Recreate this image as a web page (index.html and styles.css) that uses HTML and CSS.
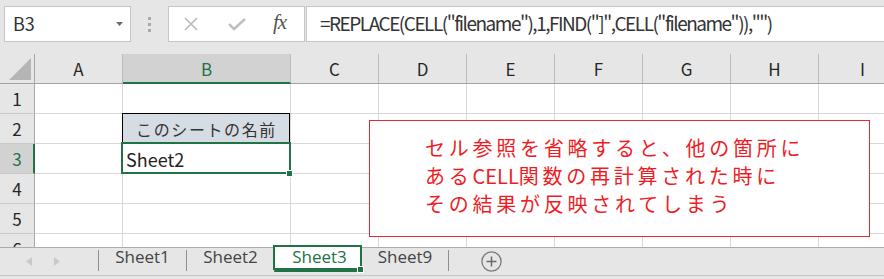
FILE: index.html
```html
<!DOCTYPE html>
<html lang="ja">
  <head>
    <meta charset="UTF-8" />
    <meta name="viewport" content="width=device-width, initial-scale=1.0" />
    <title>CELL関数 - Excel</title>
    <link rel="stylesheet" href="styles.css">
  </head>
  <body>
    <div class="formula-bar">
      <div class="name-box">
        <span>B3</span>
        <svg class="drop" width="7" height="4" viewBox="0 0 7 4"><path d="M0 0h7L3.5 4z" fill="#6b6b6b"/></svg>
      </div>
      <div class="grip"><i></i><i></i><i></i></div>
      <div class="fx-buttons">
        <svg width="16" height="14" viewBox="0 0 16 14"><path d="M2 1l12 12M14 1L2 13" stroke="#b9b9b9" stroke-width="1.6" fill="none"/></svg>
        <svg width="18" height="13" viewBox="0 0 18 13"><path d="M1 6l5 5L17 1" stroke="#bdbdbd" stroke-width="2.4" fill="none"/></svg>
        <span class="fx">fx</span>
      </div>
      <div class="formula">=REPLACE(CELL("filename"),1,FIND("]",CELL("filename")),"")</div>
    </div>

    <div class="sheet">
      <div class="row head">
        <div class="rh corner"><svg width="22" height="22" viewBox="0 0 22 22"><path d="M22 0v22H0z" fill="#b5b5b5"/></svg></div>
        <div class="ch">A</div>
        <div class="ch wide selected">B</div>
        <div class="ch">C</div>
        <div class="ch">D</div>
        <div class="ch">E</div>
        <div class="ch">F</div>
        <div class="ch">G</div>
        <div class="ch">H</div>
        <div class="ch">I</div>
      </div>

      <div class="row">
        <div class="rh">1</div>
        <div class="c"></div><div class="c wide"></div><div class="c"></div><div class="c"></div><div class="c"></div>
        <div class="c"></div><div class="c"></div><div class="c"></div><div class="c"></div>
      </div>

      <div class="row">
        <div class="rh">2</div>
        <div class="c"></div>
        <div class="c wide title">このシートの名前</div>
        <div class="c"></div><div class="c"></div><div class="c"></div>
        <div class="c"></div><div class="c"></div><div class="c"></div><div class="c"></div>
      </div>

      <div class="row">
        <div class="rh selected">3</div>
        <div class="c"></div>
        <div class="c wide active">Sheet2</div>
        <div class="c"></div><div class="c"></div><div class="c"></div>
        <div class="c"></div><div class="c"></div><div class="c"></div><div class="c"></div>
      </div>

      <div class="row">
        <div class="rh">4</div>
        <div class="c"></div><div class="c wide"></div><div class="c"></div><div class="c"></div><div class="c"></div>
        <div class="c"></div><div class="c"></div><div class="c"></div><div class="c"></div>
      </div>

      <div class="row">
        <div class="rh">5</div>
        <div class="c"></div><div class="c wide"></div><div class="c"></div><div class="c"></div><div class="c"></div>
        <div class="c"></div><div class="c"></div><div class="c"></div><div class="c"></div>
      </div>

      <div class="row">
        <div class="rh">6</div>
        <div class="c"></div><div class="c wide"></div><div class="c"></div><div class="c"></div><div class="c"></div>
        <div class="c"></div><div class="c"></div><div class="c"></div><div class="c"></div>
      </div>

      <!-- テキストボックス（図形） -->
      <div class="note">
        セル参照を省略すると、他の箇所に<br>
        ある<span class="half">CELL</span>関数の再計算された時に<br>
        その結果が反映されてしまう
      </div>
    </div>

    <div class="tabs">
      <div class="nav">
        <svg width="6" height="9" viewBox="0 0 6 9"><path d="M6 0v9L0 4.5z" fill="#c9c9c9"/></svg>
        <svg width="6" height="9" viewBox="0 0 6 9"><path d="M0 0v9l6-4.5z" fill="#c9c9c9"/></svg>
      </div>
      <div class="tab">Sheet1</div>
      <div class="tab">Sheet2</div>
      <div class="tab active">Sheet3</div>
      <div class="tab after">Sheet9</div>
      <div class="tab-end"></div>
      <svg class="add" width="21" height="21" viewBox="0 0 21 21">
        <circle cx="10.5" cy="10.5" r="9.6" stroke="#7a7a7a" stroke-width="1.3" fill="none"/>
        <path d="M10.5 5.5v10M5.5 10.5h10" stroke="#6a6a6a" stroke-width="1.5"/>
      </svg>
    </div>
    <div class="status"></div>
  </body>
</html>
```

FILE: styles.css
```css
body {
  margin: 0;
  padding: 0;
  width: 884px;
  height: 279px;
  overflow: hidden;
  background-color: #e6e6e6;
  font-family: "Noto Sans CJK JP", "Noto Sans", sans-serif;
  color: #262626;
}

/* 数式バー */
.formula-bar {
  display: flex;
  align-items: flex-start;
  height: 54px;
  padding: 6px 0 0 4px;
  box-sizing: border-box;
}

.name-box {
  display: flex;
  align-items: center;
  justify-content: space-between;
  width: 127px;
  height: 36px;
  padding: 0 7px 0 8px;
  box-sizing: border-box;
  background-color: #fff;
  border: 1px solid #c6c6c6;
  font-size: 18px;
  color: #333;
}

.name-box span {
  margin-top: -2px;
}

.grip {
  display: flex;
  flex-direction: column;
  gap: 3px;
  width: 4px;
  margin: 11px 16px 0 17px;
}

.grip i {
  width: 3px;
  height: 3px;
  background-color: #a9a9a9;
}

.fx-buttons {
  display: flex;
  align-items: center;
  width: 137px;
  height: 36px;
  padding-left: 14px;
  box-sizing: border-box;
  background-color: #fff;
  border: 1px solid #c6c6c6;
}

.fx-buttons svg:first-child {
  margin-right: 29px;
}

.fx {
  margin-left: 27px;
  font-family: "Liberation Serif", serif;
  font-style: italic;
  font-size: 21px;
  color: #555;
  letter-spacing: -1px;
  margin-top: -3px;
}

.formula {
  flex: 1;
  height: 36px;
  margin-left: 1px;
  padding-left: 13px;
  box-sizing: border-box;
  background-color: #fff;
  border: 1px solid #c6c6c6;
  border-right: none;
  font-size: 19px;
  line-height: 32px;
  letter-spacing: -1.5px;
  color: #333;
  white-space: nowrap;
}

/* シート */
.sheet {
  position: relative;
  height: 193px;
  overflow: hidden;
  background-color: #fff;
}

.row {
  display: flex;
  height: 30px;
}

.rh,
.ch,
.c {
  flex: none;
  display: flex;
  align-items: center;
  box-sizing: border-box;
  height: 30px;
}

.rh {
  width: 35px;
  justify-content: center;
  background-color: #e6e6e6;
  border-right: 1px solid #a8a8a8;
  border-bottom: 1px solid #c9c9c9;
  font-size: 17px;
}

.rh.selected {
  background-color: #d2d2d2;
  border-right: 2px solid #217346;
  padding-left: 1px;
  color: #217346;
}

.corner {
  align-items: flex-end;
  justify-content: flex-end;
  padding: 0 3px 3px 0;
  border-bottom: 1px solid #a3a3a3;
}

.ch {
  width: 88px;
  justify-content: center;
  background-color: #e6e6e6;
  border-right: 1px solid #bcbcbc;
  border-bottom: 1px solid #a3a3a3;
  font-size: 17px;
}

.ch.selected {
  background-color: #d2d2d2;
  border-bottom: 2px solid #217346;
  color: #217346;
}

.c {
  width: 88px;
  border-right: 1px solid #d8d8d8;
  border-bottom: 1px solid #d8d8d8;
  font-size: 18px;
  color: #222;
}

.wide {
  width: 168px;
}

.title {
  position: relative;
  justify-content: center;
  background-color: #d6dce4;
  font-size: 16px;
  letter-spacing: 1.6px;
  color: #333;
}

.title::after {
  content: "";
  position: absolute;
  top: -1px;
  left: -1px;
  right: 0;
  bottom: 0;
  border: 1px solid #000;
}

.active {
  position: relative;
  padding-left: 3px;
}

.active::after {
  content: "";
  position: absolute;
  top: -2px;
  left: -2px;
  right: -1px;
  bottom: -1px;
  border: 2px solid #217346;
}

.active::before {
  content: "";
  position: absolute;
  right: -3px;
  bottom: -4px;
  width: 5px;
  height: 5px;
  background-color: #217346;
  border: 1px solid #fff;
  z-index: 1;
}

/* 図形のテキストボックス */
.note {
  position: absolute;
  top: 66px;
  left: 369px;
  width: 501px;
  height: 117px;
  padding: 13px 0 0 55px;
  box-sizing: border-box;
  background-color: #fff;
  border: 1px solid #ea2630;
  color: #ee1d25;
  font-size: 20px;
  line-height: 28px;
  letter-spacing: 3.75px;
  white-space: nowrap;
}

.half {
  letter-spacing: 0;
}

/* シート見出し */
.tabs {
  display: flex;
  align-items: flex-start;
  height: 28px;
  box-sizing: border-box;
  border-top: 1px solid #ababab;
  font-family: "Open Sans", "Noto Sans", sans-serif;
  font-size: 17px;
  color: #444;
}

.nav {
  display: flex;
  align-items: center;
  gap: 22px;
  width: 98px;
  height: 26px;
  padding-left: 26px;
  box-sizing: border-box;
}

.tab {
  display: flex;
  justify-content: center;
  width: 88px;
  height: 21px;
  margin-top: 2px;
  box-sizing: border-box;
  border-left: 1px solid #8f8f8f;
  line-height: 12px;
  padding-top: 1px;
}

.tab.active {
  height: 25px;
  margin-top: -1px;
  padding-top: 4px;
  background-color: #fff;
  border-left: 1px solid #a6a6a6;
  border-right: 1px solid #a6a6a6;
  border-bottom: 3px solid #217346;
  color: #217346;
}

.tab.after {
  width: 86px;
  border-left: none;
}

.tab-end {
  width: 1px;
  height: 21px;
  margin-top: 2px;
  background-color: #8f8f8f;
}

.add {
  margin: 3px 0 0 32px;
}

.status {
  height: 4px;
  border-top: 1px solid #c6c6c6;
  background-color: #e6e6e6;
}
```
